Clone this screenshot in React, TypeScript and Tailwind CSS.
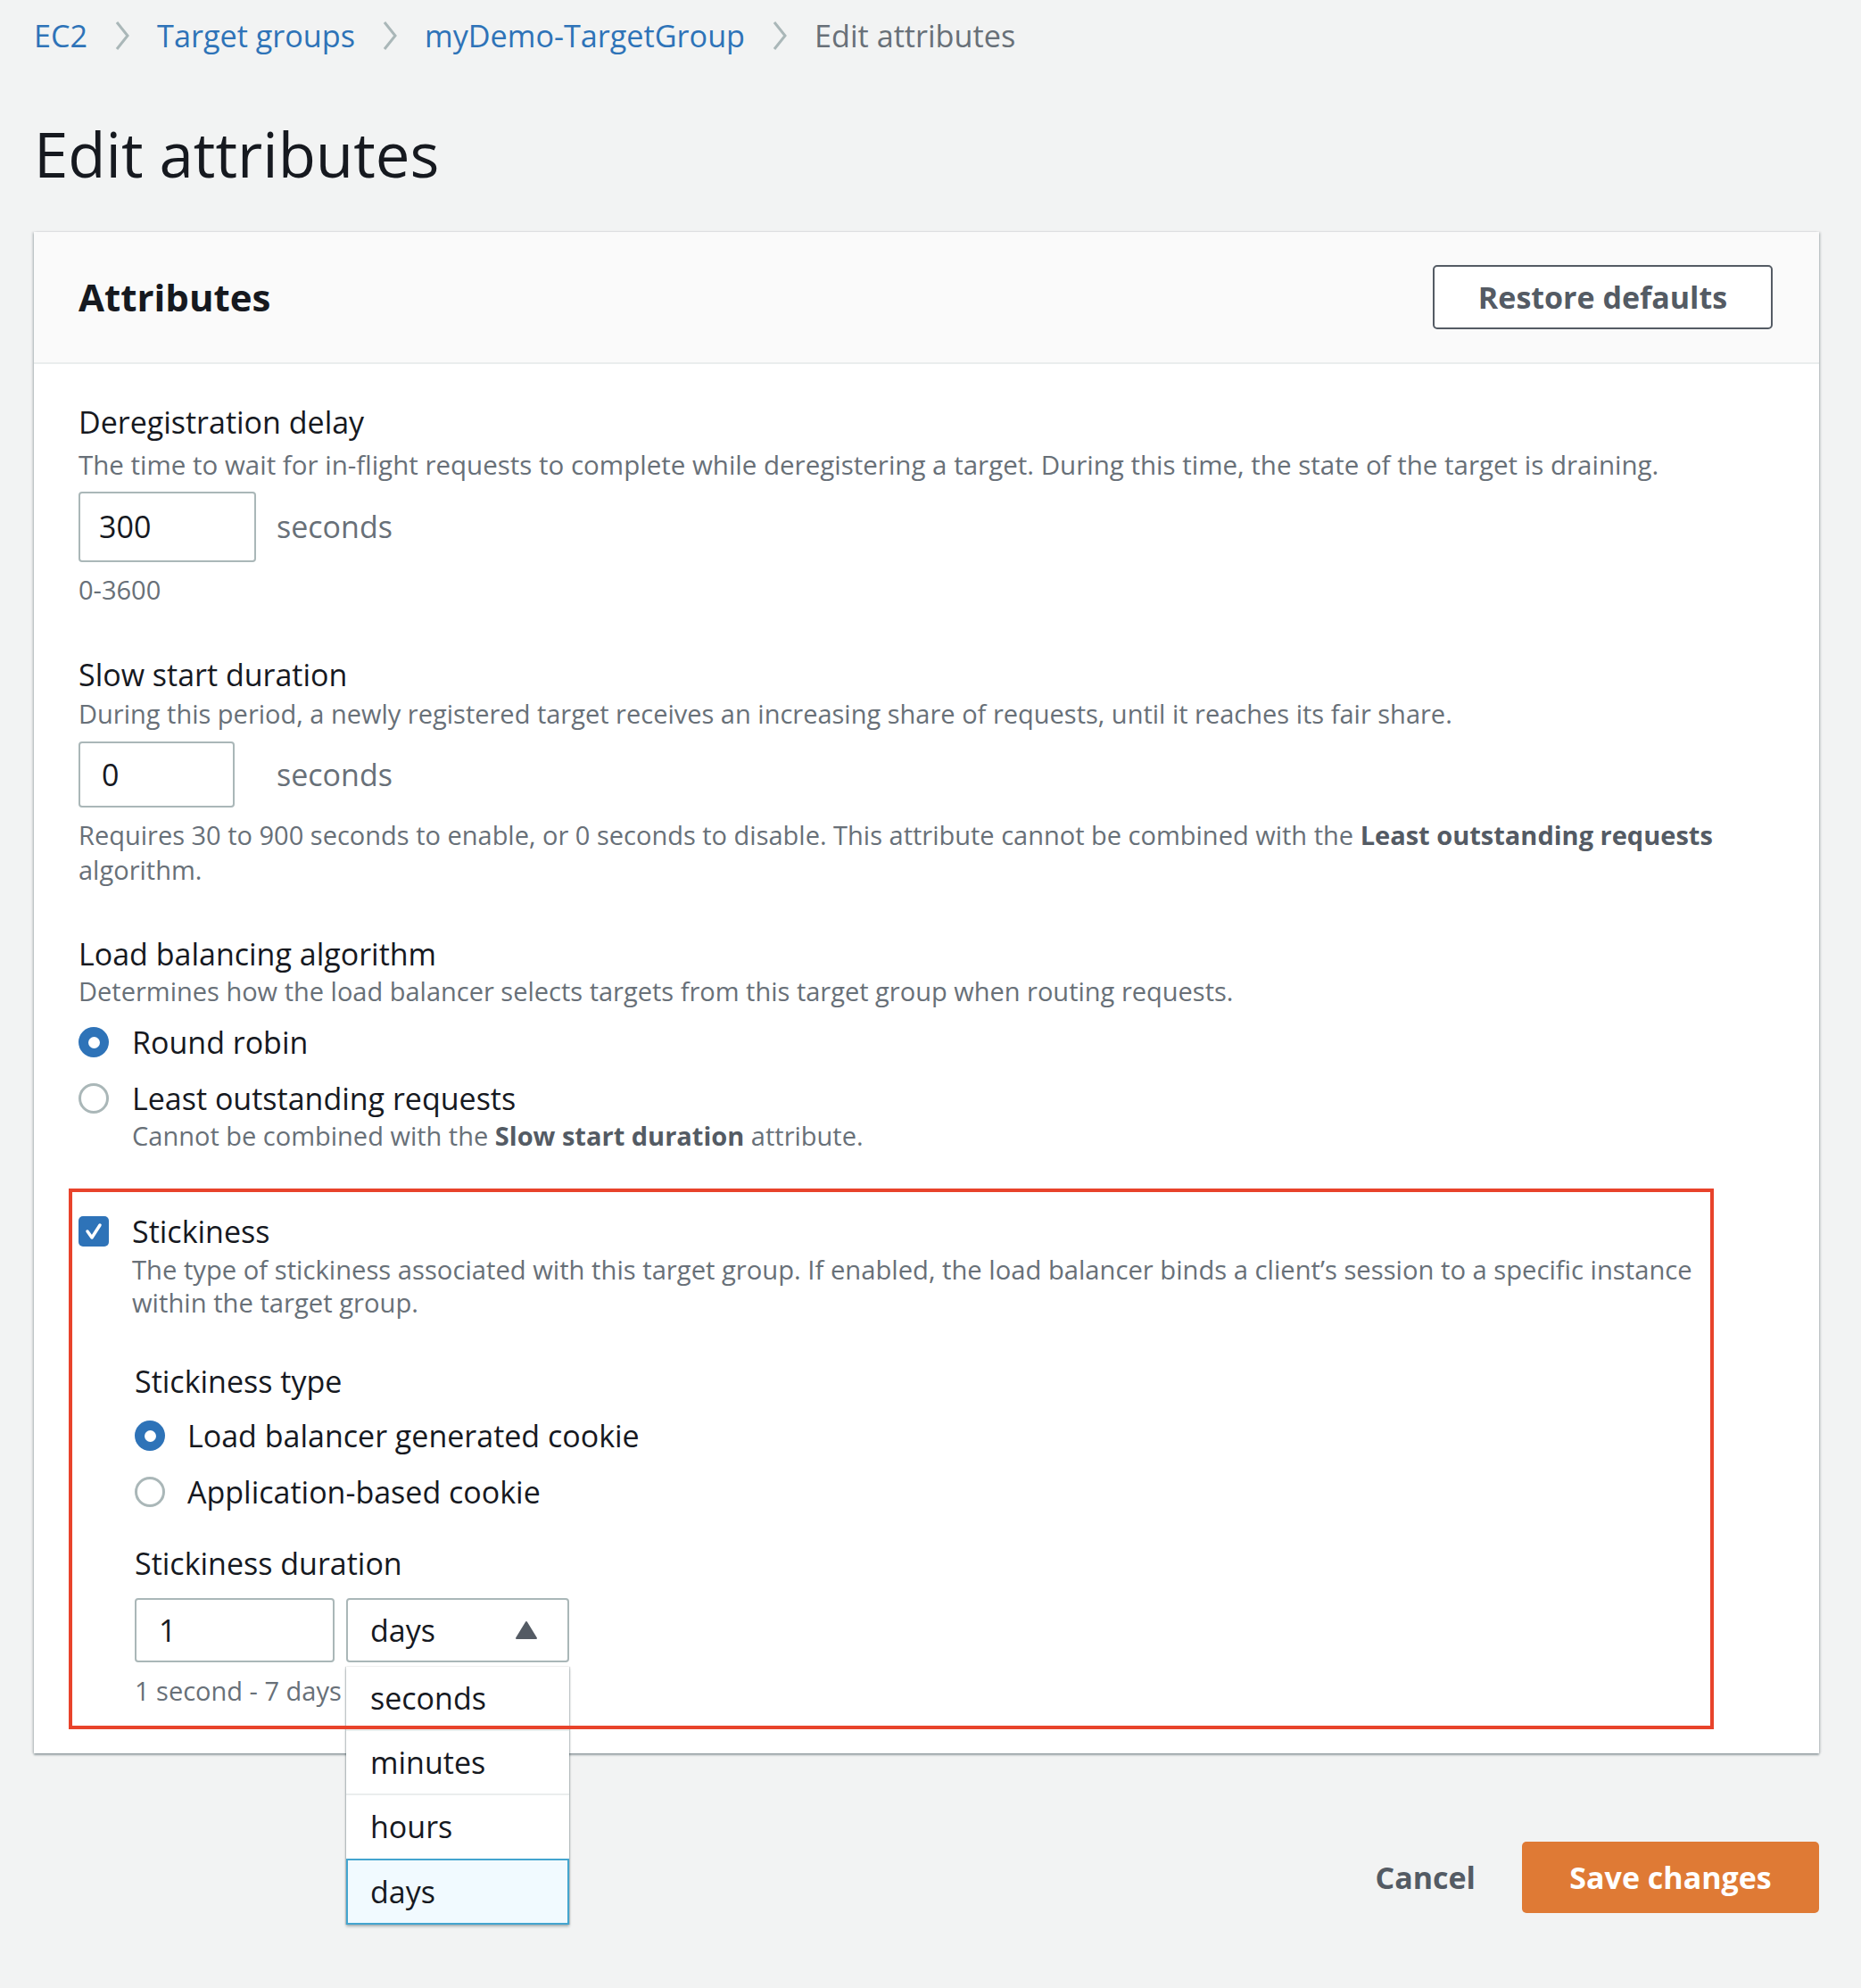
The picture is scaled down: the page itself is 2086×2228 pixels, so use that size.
import React from "react";

const Chevron = () => (
  <svg width="20" height="36" viewBox="0 0 20 36" className="shrink-0">
    <polyline points="4,3 16,18 4,33" fill="none" stroke="#aab7b8" strokeWidth="3" />
  </svg>
);

const Radio = ({ checked }: { checked: boolean }) =>
  checked ? (
    <span className="w-[34px] h-[34px] rounded-full bg-[#2e73b8] flex items-center justify-center shrink-0">
      <span className="w-[13px] h-[13px] rounded-full bg-white" />
    </span>
  ) : (
    <span className="w-[34px] h-[34px] rounded-full border-[3px] border-[#aab7b8] bg-white shrink-0" />
  );

export default function App() {
  return (
    <div className="min-h-[2228px] bg-[#f2f3f3] font-['Open_Sans',sans-serif] text-[#16191f] pl-[38px] pr-[47px] pt-[16px]">
      {/* Breadcrumb */}
      <div className="flex items-center gap-[29px] h-[48px] text-[34.2px]">
        <span className="text-[#2e73b8]">EC2</span>
        <Chevron />
        <span className="text-[#2e73b8]">Target groups</span>
        <Chevron />
        <span className="text-[#2e73b8]">myDemo-TargetGroup</span>
        <Chevron />
        <span className="text-[#687078]">Edit attributes</span>
      </div>

      {/* Title */}
      <h1 className="mt-[67px] text-[69px] leading-[82px] font-normal">Edit attributes</h1>

      {/* Card */}
      <div className="mt-[47px] bg-white shadow-[0_2px_2px_rgba(0,28,36,0.35),2px_0_2px_rgba(0,28,36,0.12),-2px_0_2px_rgba(0,28,36,0.12)]">
        <div className="h-[148px] bg-[#fafafa] border-b-2 border-[#eaeded] flex items-center justify-between pl-[50px] pr-[52px]">
          <h2 className="text-[42px] font-bold leading-[50px]">Attributes</h2>
          <button className="w-[381px] h-[72px] border-2 border-[#545b64] rounded-[5px] bg-white text-[#545b64] text-[34px] font-bold">
            Restore defaults
          </button>
        </div>

        <div className="px-[50px] pt-[43px] pb-[50px]">
          {/* Deregistration delay */}
          <div className="text-[34px] leading-[44px]">Deregistration delay</div>
          <div className="mt-[6px] text-[29.5px] leading-[40px] text-[#687078]">
            The time to wait for in-flight requests to complete while deregistering a target. During this time, the state of the target is draining.
          </div>
          <div className="mt-[10px] flex items-center">
            <div className="w-[199px] h-[79px] border-2 border-[#aab7b8] rounded-[4px] flex items-center pl-[21px] text-[34px]">300</div>
            <span className="ml-[23px] text-[34px] text-[#687078]">seconds</span>
          </div>
          <div className="mt-[11px] text-[29px] leading-[40px] text-[#687078]">0-3600</div>

          {/* Slow start */}
          <div className="mt-[53px] text-[34px] leading-[44px]">Slow start duration</div>
          <div className="mt-[2px] text-[29px] leading-[40px] text-[#687078]">
            During this period, a newly registered target receives an increasing share of requests, until it reaches its fair share.
          </div>
          <div className="mt-[11px] flex items-center">
            <div className="w-[175px] h-[74px] border-2 border-[#aab7b8] rounded-[4px] flex items-center pl-[24px] text-[34px]">0</div>
            <span className="ml-[47px] text-[34px] text-[#687078]">seconds</span>
          </div>
          <div className="mt-[11px] text-[29px] leading-[39px] text-[#687078]">
            Requires 30 to 900 seconds to enable, or 0 seconds to disable. This attribute cannot be combined with the{" "}
            <span className="font-bold text-[#545b64]">Least outstanding requests</span>
            <br />
            algorithm.
          </div>

          {/* Load balancing algorithm */}
          <div className="mt-[53px] text-[34px] leading-[44px]">Load balancing algorithm</div>
          <div className="text-[29px] leading-[40px] text-[#687078]">
            Determines how the load balancer selects targets from this target group when routing requests.
          </div>
          <div className="mt-[13px] flex items-center gap-[26px] h-[48px]">
            <Radio checked />
            <span className="text-[34px]">Round robin</span>
          </div>
          <div className="mt-[17px] flex items-center gap-[26px] h-[44px]">
            <Radio checked={false} />
            <span className="text-[34px]">Least outstanding requests</span>
          </div>
          <div className="pl-[60px] text-[29px] leading-[40px] text-[#687078]">
            Cannot be combined with the <span className="font-bold text-[#545b64]">Slow start duration</span> attribute.
          </div>

          {/* Stickiness */}
          <div className="relative mt-[65px]">
            <div className="flex items-center gap-[26px] h-[44px]">
              <span className="w-[34px] h-[34px] rounded-[5px] bg-[#2e73b8] flex items-center justify-center shrink-0">
                <svg width="24" height="24" viewBox="0 0 24 24">
                  <polyline points="5,12 10,19 19,5" fill="none" stroke="white" strokeWidth="3.5" strokeLinecap="round" strokeLinejoin="round" />
                </svg>
              </span>
              <span className="text-[34px]">Stickiness</span>
            </div>
            <div className="pl-[60px] mt-[3px] text-[29.2px] leading-[37px] text-[#687078]">
              The type of stickiness associated with this target group. If enabled, the load balancer binds a client’s session to a specific instance
              <br />
              within the target group.
            </div>

            <div className="pl-[63px]">
              <div className="mt-[47px] text-[34px] leading-[44px]">Stickiness type</div>
              <div className="mt-[15px] flex items-center gap-[25px] h-[48px]">
                <Radio checked />
                <span className="text-[34px]">Load balancer generated cookie</span>
              </div>
              <div className="mt-[15px] flex items-center gap-[25px] h-[48px]">
                <Radio checked={false} />
                <span className="text-[34px]">Application-based cookie</span>
              </div>

              <div className="mt-[34px] text-[34px] leading-[44px]">Stickiness duration</div>
              <div className="mt-[17px] flex items-center gap-[13px]">
                <div className="w-[224px] h-[72px] border-2 border-[#aab7b8] rounded-[4px] flex items-center pl-[25px] text-[34px]">1</div>
                <div className="relative">
                  <div className="w-[250px] h-[72px] border-2 border-[#aab7b8] rounded-[4px] flex items-center justify-between pl-[25px] pr-[33px] text-[34px]">
                    <span>days</span>
                    <svg width="26" height="22" viewBox="0 0 26 22">
                      <path d="M13 2 L24 20 L2 20 Z" fill="#545b64" stroke="#545b64" strokeWidth="2" strokeLinejoin="round" />
                    </svg>
                  </div>
                  {/* Dropdown */}
                  <div className="absolute left-0 top-[77px] w-[250px] bg-white z-10 shadow-[0_2px_3px_rgba(0,28,36,0.3),1px_0_1px_rgba(0,28,36,0.15),-1px_0_1px_rgba(0,28,36,0.15)] text-[34px]">
                    <div className="h-[72px] flex items-center pl-[27px] border-b-2 border-[#eaeded]">seconds</div>
                    <div className="h-[72px] flex items-center pl-[27px] border-b-2 border-[#eaeded]">minutes</div>
                    <div className="h-[71px] flex items-center pl-[27px]">hours</div>
                    <div className="h-[74px] flex items-center pl-[25px] bg-[#f1faff] border-2 border-[#44a5cf]">days</div>
                  </div>
                </div>
              </div>
              <div className="mt-[12px] text-[29px] leading-[40px] text-[#687078]">1 second - 7 days</div>
            </div>

            {/* Annotation box */}
            <div className="absolute left-[-11px] top-[-26px] right-[68px] bottom-[-23px] border-4 border-[#e8432b] pointer-events-none z-20" />
          </div>
        </div>
      </div>

      {/* Footer */}
      <div className="mt-[99px] flex justify-end items-center">
        <button className="text-[34px] font-bold text-[#545b64] mr-[52px]">Cancel</button>
        <button className="w-[333px] h-[80px] rounded-[5px] bg-[#df7a35] text-white text-[34px] font-bold">Save changes</button>
      </div>
    </div>
  );
}
